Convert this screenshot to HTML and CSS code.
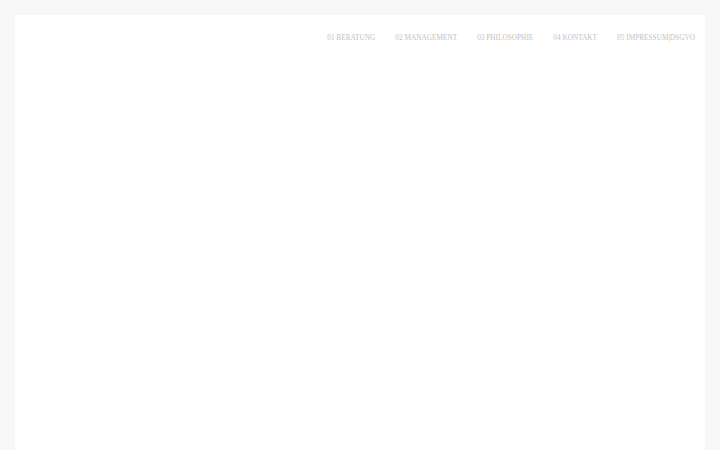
FILE: index.html
```html
<!DOCTYPE html>
<html lang="de">
<head>
<meta charset="utf-8">
<link rel="stylesheet" href="styles.css">
</head>
<body>
<div class="page">
  <header class="header">
    <nav class="nav">
      <a href="#">01 BERATUNG</a>
      <a href="#">02 MANAGEMENT</a>
      <a href="#">03 PHILOSOPHIE</a>
      <a href="#">04 KONTAKT</a>
      <a href="#">05 IMPRESSUM|DSGVO</a>
    </nav>
  </header>
</div>
</body>
</html>
```

FILE: styles.css
```css
html, body {
  margin: 0;
  padding: 0;
  height: 100%;
  background: #f8f8f8;
}
body {
  padding: 15px 15px 0 15px;
  box-sizing: border-box;
  font-family: "Liberation Serif", "Times New Roman", serif;
}
.page {
  background: #ffffff;
  min-height: 100%;
}
.header {
  display: flex;
  justify-content: flex-end;
  padding: 18px 10px 0 0;
}
.nav {
  display: flex;
  gap: 20px;
}
.nav a {
  font-size: 7.3px;
  line-height: 10px;
  color: #c2c2c2;
  text-decoration: none;
  letter-spacing: 0;
}
```
